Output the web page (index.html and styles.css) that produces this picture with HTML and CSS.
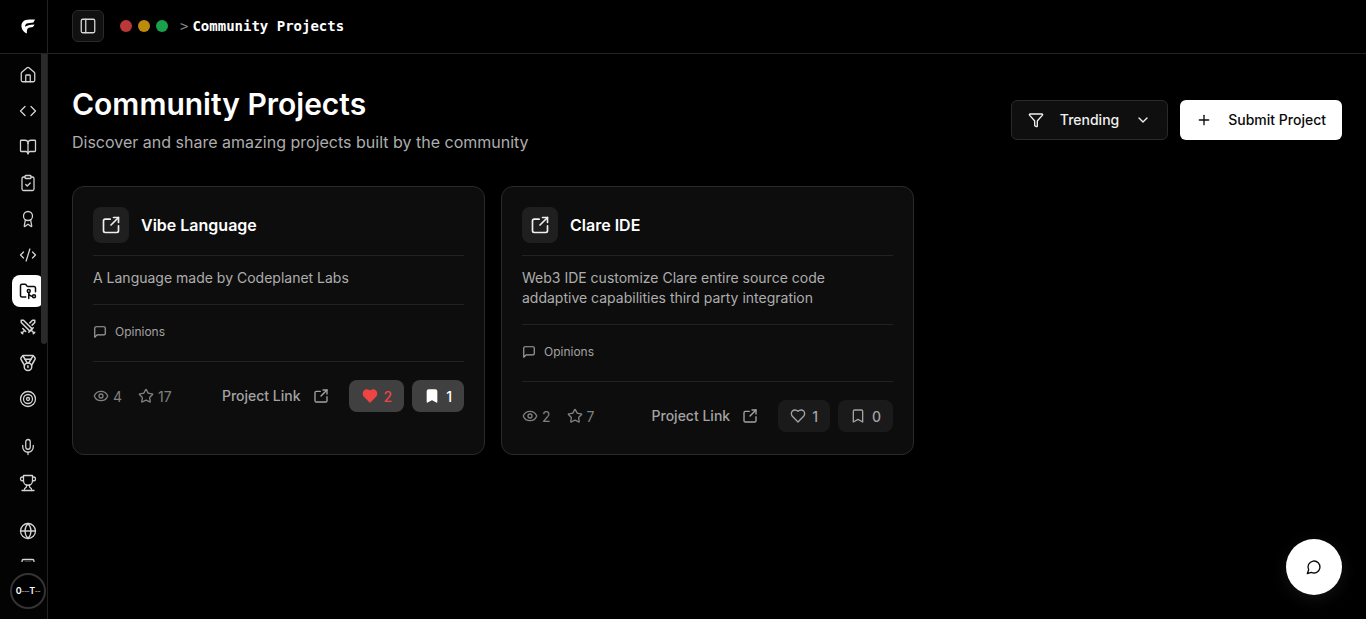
FILE: index.html
```html
<!DOCTYPE html>
<html lang="en">
<head>
<meta charset="utf-8">
<title>Community Projects</title>
<link rel="stylesheet" href="styles.css">
</head>
<body>
<svg class="sprite" width="0" height="0" aria-hidden="true">
  <symbol id="i-ext" viewBox="0 0 24 24"><path d="M21 13v6a2 2 0 0 1-2 2H5a2 2 0 0 1-2-2V7a2 2 0 0 1 2-2h6"/><path d="m21 3-9 9"/><path d="M15 3h6v6"/></symbol>
  <symbol id="i-msg" viewBox="0 0 24 24"><path d="M21 15a2 2 0 0 1-2 2H7l-4 4V5a2 2 0 0 1 2-2h14a2 2 0 0 1 2 2z"/></symbol>
  <symbol id="i-eye" viewBox="0 0 24 24"><path d="M2.06 12.35a1 1 0 0 1 0-.7 10.75 10.75 0 0 1 19.88 0 1 1 0 0 1 0 .7 10.75 10.75 0 0 1-19.88 0"/><circle cx="12" cy="12" r="3"/></symbol>
  <symbol id="i-star" viewBox="0 0 24 24"><path d="M11.53 2.3a.53.53 0 0 1 .95 0l2.31 4.68a2.12 2.12 0 0 0 1.6 1.16l5.17.76a.53.53 0 0 1 .3.9l-3.74 3.64a2.12 2.12 0 0 0-.61 1.88l.88 5.14a.53.53 0 0 1-.77.56l-4.62-2.43a2.12 2.12 0 0 0-1.97 0L6.4 21.01a.53.53 0 0 1-.77-.56l.88-5.14a2.12 2.12 0 0 0-.61-1.88L2.16 9.8a.53.53 0 0 1 .29-.9l5.17-.76a2.12 2.12 0 0 0 1.6-1.16z"/></symbol>
  <symbol id="i-heart" viewBox="0 0 24 24"><path d="M19 14c1.49-1.46 3-3.21 3-5.5A5.5 5.5 0 0 0 16.5 3c-1.76 0-3 .5-4.5 2-1.5-1.5-2.74-2-4.5-2A5.5 5.5 0 0 0 2 8.5c0 2.3 1.5 4.05 3 5.5l7 7Z"/></symbol>
  <symbol id="i-book" viewBox="0 0 24 24"><path d="m19 21-7-4-7 4V5a2 2 0 0 1 2-2h10a2 2 0 0 1 2 2v16z"/></symbol>
</svg>

<div class="app">
  <aside class="sidebar">
    <div class="logo-cell">
      <svg class="logo" viewBox="0 0 14 15" width="14" height="15"><path d="M14 .6 12.400 3.400C10 3.800 7.500 3.700 5.800 4.600 4.600 5.300 4 6.500 4.100 7.800 5.800 6.400 8.500 5.700 13.600 5.400L12 8.100C10 8.500 8 8.300 6.800 9.400 5.900 10.300 5.700 12 6 14.600 3 13.400 1 11 .5 8 .1 5.400 1 2.800 3.400 1.600 6 .4 10 .3 14 .6Z"/></svg>
    </div>
    <nav class="nav">
      <div class="nav-scroll"></div>
      <a class="nav-item"><svg class="ico" viewBox="0 0 24 24"><path d="M15 21v-8a1 1 0 0 0-1-1h-4a1 1 0 0 0-1 1v8"/><path d="M3 10a2 2 0 0 1 .709-1.528l7-5.999a2 2 0 0 1 2.582 0l7 5.999A2 2 0 0 1 21 10v9a2 2 0 0 1-2 2H5a2 2 0 0 1-2-2z"/></svg></a>
      <a class="nav-item"><svg class="ico" viewBox="0 0 24 24"><polyline points="16 18 22 12 16 6"/><polyline points="8 6 2 12 8 18"/></svg></a>
      <a class="nav-item"><svg class="ico" viewBox="0 0 24 24"><path d="M12 7v14"/><path d="M3 18a1 1 0 0 1-1-1V4a1 1 0 0 1 1-1h5a4 4 0 0 1 4 4 4 4 0 0 1 4-4h5a1 1 0 0 1 1 1v13a1 1 0 0 1-1 1h-6a3 3 0 0 0-3 3 3 3 0 0 0-3-3z"/></svg></a>
      <a class="nav-item"><svg class="ico" viewBox="0 0 24 24"><rect width="8" height="4" x="8" y="2" rx="1" ry="1"/><path d="M16 4h2a2 2 0 0 1 2 2v14a2 2 0 0 1-2 2H6a2 2 0 0 1-2-2V6a2 2 0 0 1 2-2h2"/><path d="m9 14 2 2 4-4"/></svg></a>
      <a class="nav-item"><svg class="ico" viewBox="0 0 24 24"><path d="m15.477 12.89 1.515 8.526a.5.5 0 0 1-.81.47l-3.58-2.687a1 1 0 0 0-1.197 0l-3.586 2.686a.5.5 0 0 1-.81-.469l1.514-8.526"/><circle cx="12" cy="8" r="6"/></svg></a>
      <a class="nav-item"><svg class="ico" viewBox="0 0 24 24"><path d="m18 16 4-4-4-4"/><path d="m6 8-4 4 4 4"/><path d="m14.5 4-5 16"/></svg></a>
      <a class="nav-item active"><svg class="ico heavy" viewBox="0 0 24 24"><path d="M9 20H4a2 2 0 0 1-2-2V5a2 2 0 0 1 2-2h3.9a2 2 0 0 1 1.69.9l.81 1.2a2 2 0 0 0 1.67.9H20a2 2 0 0 1 2 2v5"/><circle cx="13" cy="12" r="2"/><path d="M18 19c-2.800 0-5-2.200-5-5v8"/><circle cx="20" cy="19" r="2"/></svg></a>
      <a class="nav-item"><svg class="ico heavy" viewBox="0 0 24 24"><polyline points="14.5 17.5 3 6 3 3 6 3 17.5 14.5"/><line x1="13" x2="19" y1="19" y2="13"/><line x1="16" x2="20" y1="16" y2="20"/><line x1="19" x2="21" y1="21" y2="19"/><polyline points="14.5 6.5 18 3 21 3 21 6 17.5 9.5"/><line x1="5" x2="9" y1="14" y2="18"/><line x1="7" x2="4" y1="17" y2="20"/><line x1="3" x2="5" y1="19" y2="21"/></svg></a>
      <a class="nav-item"><svg class="ico heavy" viewBox="0 0 24 24"><path d="M7.21 15 2.660 7.140a2 2 0 0 1 .13-2.200L4.400 2.800A2 2 0 0 1 6 2h12a2 2 0 0 1 1.600.8l1.600 2.140a2 2 0 0 1 .14 2.200L16.790 15"/><path d="M11 12 5.120 2.200"/><path d="m13 12 5.880-9.800"/><path d="M8 7h8"/><circle cx="12" cy="17" r="5"/><path d="M12 18v-2h-.5"/></svg></a>
      <a class="nav-item group-end"><svg class="ico" viewBox="0 0 24 24"><circle cx="12" cy="12" r="10"/><circle cx="12" cy="12" r="6"/><circle cx="12" cy="12" r="2"/></svg></a>
      <a class="nav-item"><svg class="ico" viewBox="0 0 24 24"><path d="M12 19v3"/><path d="M19 10v2a7 7 0 0 1-14 0v-2"/><rect x="9" y="2" width="6" height="13" rx="3"/></svg></a>
      <a class="nav-item group-end"><svg class="ico" viewBox="0 0 24 24"><path d="M6 9H4.500a2.500 2.500 0 0 1 0-5H6"/><path d="M18 9h1.500a2.500 2.500 0 0 0 0-5H18"/><path d="M4 22h16"/><path d="M10 14.660V17c0 .55-.47.98-.97 1.210C7.850 18.750 7 20.240 7 22"/><path d="M14 14.660V17c0 .55.47.98.97 1.210C16.150 18.750 17 20.240 17 22"/><path d="M18 2H6v7a6 6 0 0 0 12 0V2Z"/></svg></a>
      <a class="nav-item"><svg class="ico" viewBox="0 0 24 24"><circle cx="12" cy="12" r="10"/><path d="M12 2a14.500 14.500 0 0 0 0 20 14.500 14.500 0 0 0 0-20"/><path d="M2 12h20"/></svg></a>
      <a class="nav-item"><svg class="ico" viewBox="0 0 24 24"><rect x="4" y="2" width="16" height="20" rx="2"/><path d="M8 6h8"/></svg></a>
    </nav>
    <div class="side-foot">
      <div class="avatar"><b>0</b><small>---</small><b>T</b><small>--</small></div>
    </div>
  </aside>

  <div class="content">
    <header class="topbar">
      <button class="toggle"><svg class="ico" viewBox="0 0 24 24"><rect width="18" height="18" x="3" y="3" rx="2"/><path d="M9 3v18"/></svg></button>
      <div class="dots"><i class="dot red"></i><i class="dot yellow"></i><i class="dot green"></i></div>
      <div class="crumb"><span class="gt">&gt;</span><b>Community Projects</b></div>
    </header>

    <main class="main">
      <div class="page-head">
        <div>
          <h1>Community Projects</h1>
          <p class="sub">Discover and share amazing projects built by the community</p>
        </div>
        <div class="actions">
          <button class="btn trending">
            <svg class="i16" viewBox="0 0 24 24"><path d="M10 20a1 1 0 0 0 .553.895l2 1A1 1 0 0 0 14 21v-7a2 2 0 0 1 .517-1.341L21.740 4.670A1 1 0 0 0 21 3H3a1 1 0 0 0-.742 1.670l7.225 7.989A2 2 0 0 1 10 14z"/></svg>
            <span>Trending</span>
            <svg class="i16 chev" viewBox="0 0 24 24"><path d="m6 9 6 6 6-6"/></svg>
          </button>
          <button class="btn submit">
            <svg class="i16" viewBox="0 0 24 24"><path d="M5 12h14"/><path d="M12 5v14"/></svg>
            <span>Submit Project</span>
          </button>
        </div>
      </div>

      <section class="grid">
        <article class="card">
          <div class="card-head">
            <div class="card-ico"><svg class="i20"><use href="#i-ext"/></svg></div>
            <h2>Vibe Language</h2>
          </div>
          <p class="desc">A Language made by Codeplanet Labs</p>
          <div class="opinions"><svg class="i14"><use href="#i-msg"/></svg><span>Opinions</span></div>
          <div class="foot">
            <div class="stats">
              <span class="stat"><svg class="i16"><use href="#i-eye"/></svg>4</span>
              <span class="stat"><svg class="i16"><use href="#i-star"/></svg>17</span>
            </div>
            <div class="foot-right">
              <a class="link"><span>Project Link</span><svg class="i16"><use href="#i-ext"/></svg></a>
              <button class="pill on liked"><svg class="i16 fill"><use href="#i-heart"/></svg>2</button>
              <button class="pill on saved"><svg class="i16 fill"><use href="#i-book"/></svg>1</button>
            </div>
          </div>
        </article>

        <article class="card">
          <div class="card-head">
            <div class="card-ico"><svg class="i20"><use href="#i-ext"/></svg></div>
            <h2>Clare IDE</h2>
          </div>
          <p class="desc">Web3 IDE customize Clare entire source code addaptive capabilities third party integration</p>
          <div class="opinions"><svg class="i14"><use href="#i-msg"/></svg><span>Opinions</span></div>
          <div class="foot">
            <div class="stats">
              <span class="stat"><svg class="i16"><use href="#i-eye"/></svg>2</span>
              <span class="stat"><svg class="i16"><use href="#i-star"/></svg>7</span>
            </div>
            <div class="foot-right">
              <a class="link"><span>Project Link</span><svg class="i16"><use href="#i-ext"/></svg></a>
              <button class="pill"><svg class="i16"><use href="#i-heart"/></svg>1</button>
              <button class="pill"><svg class="i16"><use href="#i-book"/></svg>0</button>
            </div>
          </div>
        </article>
      </section>
    </main>
  </div>
</div>

<button class="fab"><svg class="i16" viewBox="0 0 24 24"><path d="M7.900 20A9 9 0 1 0 4 16.100L2 22Z"/></svg></button>
</body>
</html>
```
FILE: styles.css
```css
* { box-sizing: border-box; }
html, body { height: 100%; }
body {
  margin: 0;
  background: #000;
  color: #fff;
  font-family: Inter, "Liberation Sans", sans-serif;
  overflow: hidden;
}
button { font-family: inherit; cursor: pointer; }
.sprite { position: absolute; }

svg { fill: none; stroke: currentColor; stroke-linecap: round; stroke-linejoin: round; stroke-width: 2; flex: none; }
.ico { width: 18px; height: 18px; stroke-width: 1.7; }
.ico.heavy { stroke-width: 2; }
.i14 { width: 14px; height: 14px; }
.i16 { width: 16px; height: 16px; }
.i20 { width: 20px; height: 20px; }
.fill { fill: currentColor; }

.app { display: flex; height: 100vh; }

.sidebar {
  width: 48px;
  flex: none;
  display: flex;
  flex-direction: column;
  border-right: 1px solid #222;
}
.logo-cell {
  height: 54px;
  flex: none;
  display: flex;
  align-items: center;
  padding-left: 21px;
  border-bottom: 1px solid #222;
}
.logo { fill: #fff; stroke: none; margin-top: -1px; }
.nav {
  position: relative;
  flex: 1;
  min-height: 0;
  overflow: hidden;
  padding: 5px 0 0 12px;
  display: flex;
  flex-direction: column;
  gap: 4px;
  background: #030303;
}
.nav-scroll {
  position: absolute;
  top: 0;
  right: 0;
  width: 6px;
  height: 290px;
  background: #2a2a2a;
  border-radius: 0 0 3px 3px;
  z-index: 1;
}
.nav-item {
  width: 32px;
  height: 32px;
  flex: none;
  display: flex;
  align-items: center;
  justify-content: center;
  color: #d4d4d4;
  border-radius: 8px;
}
.nav-item.active { background: #fff; color: #0a0a0a; }
.group-end { margin-bottom: 12px; }
.side-foot {
  height: 57px;
  flex: none;
  padding: 11px 0 0 10px;
  background: #030303;
}
.avatar {
  width: 36px;
  height: 36px;
  border-radius: 50%;
  border: 2px solid #333;
  background: #000;
  display: flex;
  align-items: center;
  justify-content: center;
  font-size: 9px;
  line-height: 10px;
  white-space: nowrap;
}
.avatar b { font-weight: 600; letter-spacing: -.5px; }
.avatar small { font-size: 7px; letter-spacing: -.5px; color: #ccc; margin-top: 1px; }

.content { flex: 1; min-width: 0; display: flex; flex-direction: column; }
.topbar {
  height: 54px;
  flex: none;
  display: flex;
  align-items: center;
  padding: 0 24px;
  border-bottom: 1px solid #222;
}
.toggle {
  width: 32px;
  height: 32px;
  padding: 0;
  margin-top: -1px;
  display: flex;
  align-items: center;
  justify-content: center;
  background: #111;
  border: 1px solid #2a2a2a;
  border-radius: 6px;
  color: #d8d8d8;
}
.dots { display: flex; gap: 6px; margin-left: 16px; margin-top: -1px; }
.dot { width: 12px; height: 12px; border-radius: 50%; display: block; }
.red { background: #bc3838; }
.yellow { background: #be8a0c; }
.green { background: #1ba14b; }
.crumb {
  margin-left: 12px;
  margin-top: -2px;
  font-family: "DejaVu Sans Mono", monospace;
  font-size: 14px;
  display: flex;
  align-items: center;
  gap: 4px;
}
.gt { color: #888; }
.crumb b { color: #fff; font-weight: 700; }

.main { flex: 1; min-height: 0; padding: 32px 24px; }
.page-head { display: flex; align-items: center; justify-content: space-between; margin-bottom: 32px; }
h1 { margin: 0 0 8px; font-size: 30px; line-height: 36px; font-weight: 600; }
.sub { margin: 0; font-size: 16px; line-height: 24px; color: #adadad; }
.actions { display: flex; gap: 12px; }
.btn {
  height: 40px;
  display: flex;
  align-items: center;
  font-size: 14px;
  font-weight: 500;
  border-radius: 6px;
}
.btn span { margin-top: -2px; }
.trending {
  padding: 0 16px;
  background: #0f0f0f;
  border: 1px solid #2a2a2a;
  color: #f0f0f0;
}
.trending span { margin-left: 16px; margin-right: 16px; }
.submit {
  padding: 0 16px;
  background: #fff;
  border: 0;
  color: #0a0a0a;
}
.submit span { margin-left: 16px; }

.grid { display: grid; grid-template-columns: repeat(auto-fill, 413px); gap: 16px; }
.card {
  background: #0d0d0d;
  border: 1px solid #2a2a2a;
  border-radius: 12px;
  padding: 20px 20px 22px;
  display: flex;
  flex-direction: column;
}
.card-head {
  display: flex;
  align-items: center;
  gap: 12px;
  padding-bottom: 12px;
  border-bottom: 1px solid #222;
}
.card-ico {
  width: 36px;
  height: 36px;
  display: flex;
  align-items: center;
  justify-content: center;
  background: #1f1f1f;
  border-radius: 8px;
  color: #f0f0f0;
}
h2 { margin: 0; font-size: 16px; line-height: 24px; font-weight: 600; }
.desc {
  margin: 0;
  padding: 12px 0 16px;
  font-size: 14px;
  line-height: 20px;
  color: #adadad;
  border-bottom: 1px solid #222;
}
.opinions {
  display: flex;
  align-items: center;
  gap: 8px;
  padding: 17px 0 19px;
  font-size: 12px;
  line-height: 20px;
  color: #a3a3a3;
  border-bottom: 1px solid #222;
}
.foot { display: flex; align-items: center; justify-content: space-between; padding-top: 18px; }
.stats { display: flex; gap: 16px; }
.stat { display: flex; align-items: center; gap: 4px; font-size: 14px; color: #808080; }
.foot-right { display: flex; align-items: center; gap: 8px; }
.link {
  display: flex;
  align-items: center;
  gap: 12px;
  font-size: 14px;
  font-weight: 500;
  color: #a3a3a3;
  margin-right: 12px;
}
.link span { margin-top: -2px; }
.pill {
  height: 32px;
  padding: 0 12px;
  display: flex;
  align-items: center;
  gap: 6px;
  border: 0;
  border-radius: 8px;
  background: #1a1a1a;
  color: #a3a3a3;
  font-size: 14px;
  font-weight: 500;
}
.pill.on { background: #404040; }
.liked { color: #ef4444; padding: 0 12px 0 13px; }
.saved { color: #fff; }

.fab {
  position: fixed;
  right: 24px;
  bottom: 24px;
  width: 56px;
  height: 56px;
  padding: 0;
  border: 0;
  border-radius: 50%;
  background: #fff;
  color: #0a0a0a;
  display: flex;
  align-items: center;
  justify-content: center;
  box-shadow: 0 4px 16px rgba(255,255,255,.08);
}
```
